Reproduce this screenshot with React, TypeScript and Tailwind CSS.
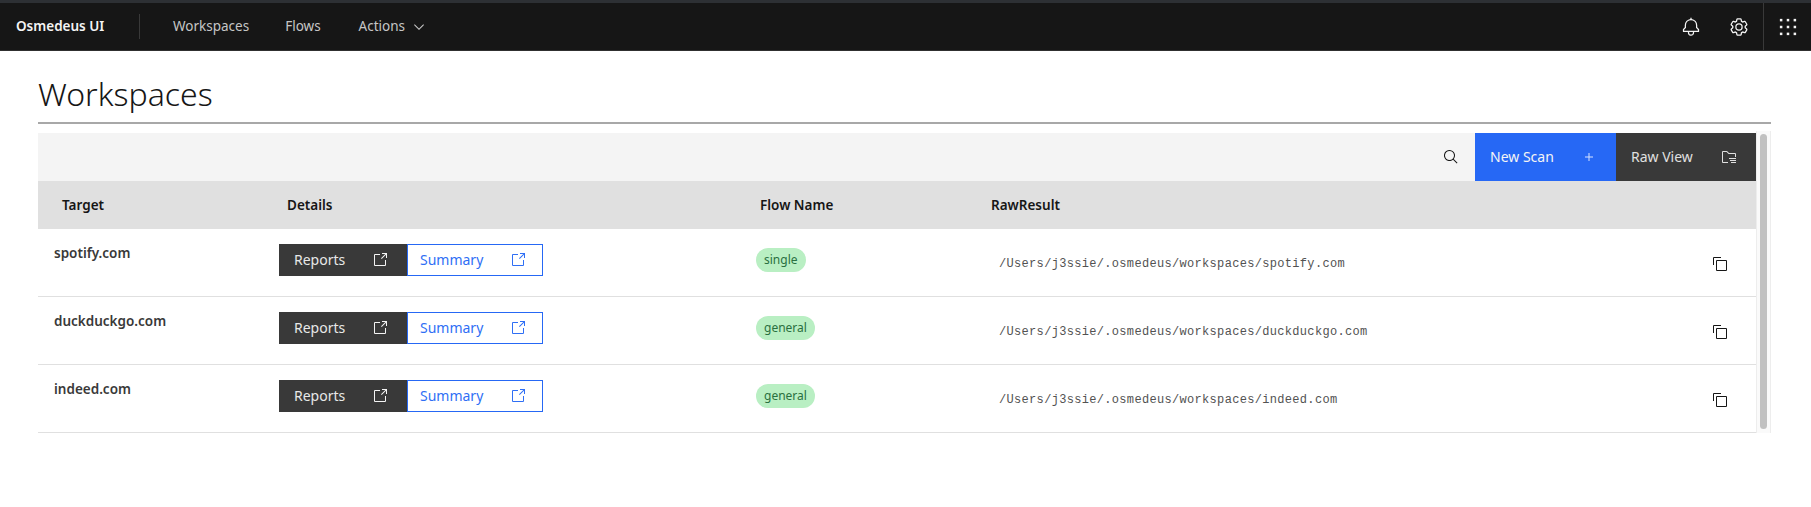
import type { ReactNode } from 'react'

function Icon({ size = 16, className, children }: { size?: number; className?: string; children: ReactNode }) {
  return (
    <svg width={size} height={size} viewBox="0 0 32 32" fill="currentColor" className={className}>
      {children}
    </svg>
  )
}

function LaunchIcon({ className }: { className?: string }) {
  return (
    <Icon className={className}>
      <path d="M26,28H6a2.0027,2.0027,0,0,1-2-2V6A2.0027,2.0027,0,0,1,6,4H16V6H6V26H26V16h2V26A2.0027,2.0027,0,0,1,26,28Z" />
      <polygon points="20 2 20 4 26.586 4 18 12.586 19.414 14 28 5.414 28 12 30 12 30 2 20 2" />
    </Icon>
  )
}

function CopyIcon() {
  return (
    <Icon>
      <path d="M28,10V28H10V10H28m0-2H10a2,2,0,0,0-2,2V28a2,2,0,0,0,2,2H28a2,2,0,0,0,2-2V10a2,2,0,0,0-2-2Z" />
      <path d="M4,18H2V4A2,2,0,0,1,4,2H18V4H4Z" />
    </Icon>
  )
}

function BellIcon() {
  return (
    <Icon size={20}>
      <path d="M28.7071,19.293,26,16.5859V13a10.0136,10.0136,0,0,0-9-9.9492V1H15V3.0508A10.0136,10.0136,0,0,0,6,13v3.5859L3.2929,19.293A1,1,0,0,0,3,20v3a1,1,0,0,0,1,1h7v.7768a5.152,5.152,0,0,0,4.5,5.1987A5.0057,5.0057,0,0,0,21,25V24h7a1,1,0,0,0,1-1V20A1,1,0,0,0,28.7071,19.293ZM19,25a3,3,0,0,1-6,0V24h6Zm8-3H5V20.4141L7.707,17.707A1,1,0,0,0,8,17V13a8,8,0,0,1,16,0v4a1,1,0,0,0,.293.707L27,20.4141Z" />
    </Icon>
  )
}

function GearIcon() {
  return (
    <Icon size={20}>
      <path d="M27,16.76c0-.25,0-.5,0-.76s0-.51,0-.77l1.92-1.68A2,2,0,0,0,29.3,11L26.94,7a2,2,0,0,0-1.73-1,2,2,0,0,0-.64.1l-2.43.82a11.35,11.35,0,0,0-1.31-.75l-.51-2.52a2,2,0,0,0-2-1.61H13.64a2,2,0,0,0-2,1.61l-.51,2.52a11.48,11.48,0,0,0-1.32.75L7.43,6.06A2,2,0,0,0,6.79,6,2,2,0,0,0,5.06,7L2.7,11a2,2,0,0,0,.41,2.51L5,15.24c0,.25,0,.5,0,.76s0,.51,0,.77L3.11,18.45A2,2,0,0,0,2.7,21L5.06,25a2,2,0,0,0,1.73,1,2,2,0,0,0,.64-.1l2.43-.82a11.35,11.35,0,0,0,1.31.75l.51,2.52a2,2,0,0,0,2,1.61h4.72a2,2,0,0,0,2-1.61l.51-2.52a11.48,11.48,0,0,0,1.32-.75l2.42.82a2,2,0,0,0,.64.1,2,2,0,0,0,1.73-1L29.3,21a2,2,0,0,0-.41-2.51ZM25.21,24l-3.43-1.16a8.86,8.86,0,0,1-2.71,1.57L18.36,28H13.64l-.71-3.55a9.36,9.36,0,0,1-2.7-1.57L6.79,24,4.43,20l2.72-2.4a8.9,8.9,0,0,1,0-3.13L4.43,12,6.79,8l3.43,1.16a8.86,8.86,0,0,1,2.71-1.57L13.64,4h4.72l.71,3.55a9.36,9.36,0,0,1,2.7,1.57L25.21,8,27.57,12l-2.72,2.4a8.9,8.9,0,0,1,0,3.13L27.57,20Z" />
      <path d="M16,22a6,6,0,1,1,6-6A5.94,5.94,0,0,1,16,22Zm0-10a3.91,3.91,0,0,0-4,4,3.91,3.91,0,0,0,4,4,3.91,3.91,0,0,0,4-4A3.91,3.91,0,0,0,16,12Z" />
    </Icon>
  )
}

function SwitcherIcon() {
  return (
    <Icon size={20}>
      {[3, 14, 25].flatMap((y) => [3, 14, 25].map((x) => <rect key={`${x}-${y}`} x={x} y={y} width="4" height="4" />))}
    </Icon>
  )
}

function FolderIcon() {
  return (
    <Icon>
      <path d="M28,8H16L12.59,4.59A2,2,0,0,0,11.17,4H4A2,2,0,0,0,2,6V26a2,2,0,0,0,2,2H14V26H4V6h7.17l3.41,3.41L15.17,10H28v6h2V10a2,2,0,0,0-2-2Z" />
      <path d="M16,18H30v2H16Zm2,4H30v2H18Zm2,4H30v2H20Z" />
    </Icon>
  )
}

function Header() {
  return (
    <header className="flex h-[51px] items-stretch border-t-[3px] border-b border-t-[#2d3034] border-b-[#303030] bg-[#161616] text-[13.5px]">
      <div className="flex w-[139px] items-center pl-4">
        <span className="font-semibold text-[#f4f4f4]">Osmedeus UI</span>
      </div>
      <nav className="my-[11px] flex items-center gap-9 border-l border-[#393939] pl-[33px] text-[#c6c6c6]">
        <span>Workspaces</span>
        <span>Flows</span>
        <span className="ml-0.5 flex items-center gap-1.5">
          Actions
          <Icon>
            <polygon points="16 22 6 12 7.4 10.6 16 19.2 24.6 10.6 26 12" />
          </Icon>
        </span>
      </nav>
      <div className="ml-auto flex items-center text-[#f4f4f4]">
        <div className="flex w-12 justify-center"><BellIcon /></div>
        <div className="flex w-12 justify-center"><GearIcon /></div>
        <div className="flex h-full w-12 items-center justify-center border-l border-[#393939]"><SwitcherIcon /></div>
      </div>
    </header>
  )
}

function ToolbarButton({ label, icon, className }: { label: string; icon: ReactNode; className: string }) {
  return (
    <div className={`flex h-12 items-center justify-between pl-[15px] pr-[19px] text-sm ${className}`}>
      <span>{label}</span>
      {icon}
    </div>
  )
}

function Row({ target, flow, path }: { target: string; flow: string; path: string }) {
  return (
    <div className="grid h-[68px] grid-cols-[241px_477px_235px_1fr] border-b border-[#e0e0e0]">
      <div className="pl-4 pt-3.5 text-[13.5px] font-semibold text-[#393939]">{target}</div>
      <div className="flex pt-[15px] text-sm">
        <div className="flex h-8 w-[128px] items-center justify-between bg-[#393939] pl-[15px] pr-[19px] text-[#e8e8e8]">
          Reports
          <LaunchIcon className="text-[#f4f4f4]" />
        </div>
        <div className="flex h-8 w-[136px] items-center justify-between border border-[#2668f5] pl-3 pr-4 text-[#2f6ff5]">
          Summary
          <LaunchIcon />
        </div>
      </div>
      <div className="flex items-start pt-[19px]">
        <span className="flex h-6 items-center rounded-xl bg-[#b9efc3] px-2 text-xs text-[#2a7040]">{flow}</span>
      </div>
      <div className="flex items-start justify-between pl-2 pr-7 pt-[27px] font-['Liberation_Mono',monospace] text-xs leading-4 tracking-[0.32px] text-[#525252]">
        <span>{path}</span>
        <span className="text-[#161616]"><CopyIcon /></span>
      </div>
    </div>
  )
}

export default function App() {
  return (
    <div className="min-h-[507px] bg-white font-['Noto_Sans',sans-serif] text-[#161616]">
      <Header />
      <main className="pl-[38px] pr-10">
        <h1 className="flex h-[73px] items-end border-b-2 border-[#a8a8a8] pb-2 text-[32px] font-light leading-10 text-[#161616]">
          Workspaces
        </h1>
        <div className="mt-[7px] flex">
          <div className="min-w-0 flex-1 pt-0.5">
            <div className="flex h-12 items-stretch justify-end bg-[#f4f4f4]">
              <div className="flex w-12 items-center justify-center">
                <Icon>
                  <path d="M29,27.5859l-7.5521-7.5521a11.0177,11.0177,0,1,0-1.4141,1.4141L27.5859,29ZM4,13a9,9,0,1,1,9,9A9.01,9.01,0,0,1,4,13Z" />
                </Icon>
              </div>
              <ToolbarButton
                label="New Scan"
                className="w-[141px] bg-[#2668f5] text-[#f4f4f4]"
                icon={
                  <Icon className="text-[#d5e2ff]">
                    <polygon points="17 15 17 8 15 8 15 15 8 15 8 17 15 17 15 24 17 24 17 17 24 17 24 15 17 15" />
                  </Icon>
                }
              />
              <ToolbarButton label="Raw View" className="w-[140px] bg-[#393939] text-[#e0e0e0]" icon={<FolderIcon />} />
            </div>
            <div className="grid h-12 grid-cols-[241px_477px_235px_1fr] items-center bg-[#e0e0e0] text-[13.5px] font-semibold">
              <div className="pl-6">Target</div>
              <div className="pl-2">Details</div>
              <div className="pl-1">Flow Name</div>
              <div>RawResult</div>
            </div>
            <Row target="spotify.com" flow="single" path="/Users/j3ssie/.osmedeus/workspaces/spotify.com" />
            <Row target="duckduckgo.com" flow="general" path="/Users/j3ssie/.osmedeus/workspaces/duckduckgo.com" />
            <Row target="indeed.com" flow="general" path="/Users/j3ssie/.osmedeus/workspaces/indeed.com" />
          </div>
          <div className="w-[15px] border-x border-[#ededed] bg-[#fafafa] px-[3px] pb-1 pt-[3px]">
            <div className="h-full rounded bg-[#c1c1c1]" />
          </div>
        </div>
      </main>
    </div>
  )
}
